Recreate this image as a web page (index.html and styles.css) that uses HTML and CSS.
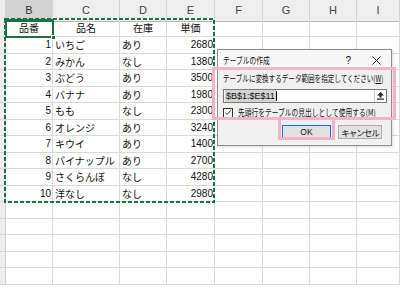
FILE: index.html
```html
<!DOCTYPE html>
<html lang="ja">
<head>
    <meta charset="UTF-8">
    <meta name="viewport" content="width=device-width, initial-scale=1.0">
    <title>テーブルの作成</title>
    <link rel="stylesheet" href="styles.css">
</head>
<body>
    <div class="sheet">
        <div class="row head">
            <div class="rh"></div><div class="ch sel">B</div><div class="ch">C</div><div class="ch">D</div><div class="ch">E</div><div class="ch">F</div><div class="ch">G</div><div class="ch">H</div><div class="ch">I</div>
        </div>
        <div class="row">
            <div class="rh"></div><div class="c mid">品番</div><div class="c mid">品名</div><div class="c mid">在庫</div><div class="c mid">単価</div><div class="c"></div><div class="c"></div><div class="c"></div><div class="c"></div>
        </div>
        <div class="row">
            <div class="rh"></div><div class="c num">1</div><div class="c">いちご</div><div class="c">あり</div><div class="c num">2680</div><div class="c"></div><div class="c"></div><div class="c"></div><div class="c"></div>
        </div>
        <div class="row s">
            <div class="rh"></div><div class="c num">2</div><div class="c">みかん</div><div class="c">なし</div><div class="c num">1380</div><div class="c"></div><div class="c"></div><div class="c"></div><div class="c"></div>
        </div>
        <div class="row">
            <div class="rh"></div><div class="c num">3</div><div class="c">ぶどう</div><div class="c">あり</div><div class="c num">3500</div><div class="c"></div><div class="c"></div><div class="c"></div><div class="c"></div>
        </div>
        <div class="row s">
            <div class="rh"></div><div class="c num">4</div><div class="c">バナナ</div><div class="c">あり</div><div class="c num">1980</div><div class="c"></div><div class="c"></div><div class="c"></div><div class="c"></div>
        </div>
        <div class="row">
            <div class="rh"></div><div class="c num">5</div><div class="c">もも</div><div class="c">なし</div><div class="c num">2300</div><div class="c"></div><div class="c"></div><div class="c"></div><div class="c"></div>
        </div>
        <div class="row s">
            <div class="rh"></div><div class="c num">6</div><div class="c">オレンジ</div><div class="c">あり</div><div class="c num">3240</div><div class="c"></div><div class="c"></div><div class="c"></div><div class="c"></div>
        </div>
        <div class="row">
            <div class="rh"></div><div class="c num">7</div><div class="c">キウイ</div><div class="c">あり</div><div class="c num">1400</div><div class="c"></div><div class="c"></div><div class="c"></div><div class="c"></div>
        </div>
        <div class="row s">
            <div class="rh"></div><div class="c num">8</div><div class="c">パイナップル</div><div class="c">あり</div><div class="c num">2700</div><div class="c"></div><div class="c"></div><div class="c"></div><div class="c"></div>
        </div>
        <div class="row">
            <div class="rh"></div><div class="c num">9</div><div class="c">さくらんぼ</div><div class="c">なし</div><div class="c num">4280</div><div class="c"></div><div class="c"></div><div class="c"></div><div class="c"></div>
        </div>
        <div class="row s">
            <div class="rh"></div><div class="c num">10</div><div class="c">洋なし</div><div class="c">なし</div><div class="c num">2980</div><div class="c"></div><div class="c"></div><div class="c"></div><div class="c"></div>
        </div>
        <div class="row">
            <div class="rh"></div><div class="c"></div><div class="c"></div><div class="c"></div><div class="c"></div><div class="c"></div><div class="c"></div><div class="c"></div><div class="c"></div>
        </div>
        <div class="row s">
            <div class="rh"></div><div class="c"></div><div class="c"></div><div class="c"></div><div class="c"></div><div class="c"></div><div class="c"></div><div class="c"></div><div class="c"></div>
        </div>
        <div class="row">
            <div class="rh"></div><div class="c"></div><div class="c"></div><div class="c"></div><div class="c"></div><div class="c"></div><div class="c"></div><div class="c"></div><div class="c"></div>
        </div>
        <div class="row s">
            <div class="rh"></div><div class="c"></div><div class="c"></div><div class="c"></div><div class="c"></div><div class="c"></div><div class="c"></div><div class="c"></div><div class="c"></div>
        </div>
        <div class="row">
            <div class="rh"></div><div class="c"></div><div class="c"></div><div class="c"></div><div class="c"></div><div class="c"></div><div class="c"></div><div class="c"></div><div class="c"></div>
        </div>
    </div>

    <!-- コピー範囲の点線 -->
    <svg class="ants" width="211" height="185" viewBox="0 0 211 185">
        <rect x="1" y="1" width="209" height="183" fill="none" stroke="#1e7145" stroke-width="2" stroke-dasharray="4 2"/>
    </svg>
    <div class="active"><span class="handle"></span></div>

    <div class="dialog">
        <div class="title">
            <span class="title-text"><span class="narrow">テーブルの作成</span></span>
            <span class="help">?</span>
            <svg class="close" width="9" height="9" viewBox="0 0 9 9">
                <path d="M0.5 0.5 L8.5 8.5 M8.5 0.5 L0.5 8.5" stroke="#222" stroke-width="1"/>
            </svg>
        </div>
        <div class="label"><span class="narrow tight">テーブルに変換するデータ範囲を指定してください(<u>W</u>)</span></div>
        <div class="ref">
            <span class="ref-text">$B$1:$E$11</span><span class="caret"></span>
            <span class="ref-btn">
                <svg width="7" height="8" viewBox="0 0 7 8">
                    <path d="M3.5 0 L7 3.5 L4.5 3.5 L4.5 5.5 L2.5 5.5 L2.5 3.5 L0 3.5 Z" fill="#222"/>
                    <rect x="0" y="6.5" width="7" height="1.2" fill="#222"/>
                </svg>
            </span>
        </div>
        <div class="check">
            <span class="box">
                <svg width="9" height="9" viewBox="0 0 9 9">
                    <path d="M1.5 4.5 L3.5 6.8 L7.8 1.8" fill="none" stroke="#222" stroke-width="1"/>
                </svg>
            </span>
            <span class="narrow">先頭行をテーブルの見出しとして使用する(<u>M</u>)</span>
        </div>
        <div class="buttons">
            <button class="btn ok">OK</button>
            <button class="btn">キャンセル</button>
        </div>
    </div>

    <!-- 強調枠 -->
    <div class="mark mark-range"></div>
    <div class="mark mark-ok"></div>
</body>
</html>
```

FILE: styles.css
```css
* {
    margin: 0;
    padding: 0;
    box-sizing: border-box;
}

body {
    position: relative;
    width: 400px;
    height: 298px;
    overflow: hidden;
    background: #ffffff;
    font-family: "Noto Sans CJK JP", "Noto Sans", sans-serif;
    color: #111;
}

/* シート */
.row {
    display: grid;
    grid-template-columns: 6px 47px 67px 47px 48px 48px 47px 47px 1fr;
    height: 17px;
}

.row.s {
    height: 16px;
}

.row.head {
    height: 20px;
}

.rh {
    background: #eeeeee;
    border-right: 1px solid #cfcfcf;
    border-bottom: 1px solid #d8d8d8;
}

.head .rh {
    border-bottom: 1px solid #b9b9b9;
}

.ch {
    background: #eeeeee;
    border-right: 1px solid #d2d2d2;
    border-bottom: 1px solid #b9b9b9;
    font-family: "Liberation Sans", sans-serif;
    font-size: 11px;
    color: #444;
    text-align: center;
    line-height: 20px;
}

.ch.sel {
    background: #d3d3d3;
    border-bottom: 2px solid #1e7145;
    color: #333;
}

.c {
    border-right: 1px solid #dadada;
    border-bottom: 1px solid #dadada;
    font-size: 10px;
    line-height: 16px;
    padding: 0 2px;
    white-space: nowrap;
    overflow: hidden;
}

.s .c {
    line-height: 15px;
}

.c.mid {
    text-align: center;
}

.c.num {
    text-align: right;
    font-family: "Liberation Sans", sans-serif;
    padding-right: 1px;
}

/* 選択範囲 */
.ants {
    position: absolute;
    left: 4px;
    top: 18px;
}

.active {
    position: absolute;
    left: 5px;
    top: 19px;
    width: 49px;
    height: 19px;
    border: 2px solid #1e7145;
}

.handle {
    position: absolute;
    right: -4px;
    bottom: -4px;
    width: 5px;
    height: 5px;
    background: #1e7145;
    border: 1px solid #fff;
}

/* ダイアログ */
.dialog {
    position: absolute;
    left: 217px;
    top: 49px;
    width: 175px;
    height: 97px;
    background: #f0f0f0;
    border: 1px solid #8c8c8c;
    box-shadow: 1px 1px 3px rgba(0, 0, 0, 0.15);
    font-size: 9px;
    color: #111;
    overflow: hidden;
}

/* Meiryo UI 風に横幅を詰める */
.narrow {
    display: inline-block;
    flex: none;
    transform: scaleX(0.75);
    transform-origin: left center;
    white-space: nowrap;
}

.narrow.tight {
    transform: scaleX(0.73);
}

.title {
    display: flex;
    align-items: center;
    height: 20px;
    padding: 0 10px 0 5px;
    background: #f7f7f7;
}

.title-text {
    flex: 1;
}

.help {
    font-family: "Liberation Sans", sans-serif;
    font-size: 10px;
    margin-right: 21px;
}

.label {
    margin: 2px 0 0 5px;
    height: 13px;
    line-height: 13px;
    white-space: nowrap;
}

.ref {
    display: flex;
    align-items: center;
    margin: 4px 0 0 5px;
    width: 164px;
    height: 14px;
    background: #fff;
    border: 1px solid #7a7a7a;
    font-family: "Liberation Sans", sans-serif;
    font-size: 9px;
}

.ref-text {
    background: #d4d4d4;
    padding: 0 1px;
    line-height: 12px;
    margin-left: 1px;
}

.caret {
    width: 1px;
    height: 10px;
    background: #000;
}

.ref-btn {
    margin-left: auto;
    width: 12px;
    height: 12px;
    border-left: 1px solid #d0d0d0;
    display: flex;
    align-items: center;
    justify-content: center;
}

.check {
    display: flex;
    align-items: center;
    gap: 5px;
    margin: 4px 0 0 5px;
    height: 11px;
    white-space: nowrap;
}

.box {
    flex: none;
    width: 10px;
    height: 10px;
    background: #fff;
    border: 1px solid #333;
    display: flex;
    align-items: center;
    justify-content: center;
}

.buttons {
    display: flex;
    justify-content: flex-end;
    gap: 7px;
    margin-top: 7px;
    padding-right: 9px;
}

.btn {
    width: 44px;
    height: 14px;
    background: #e1e1e1;
    border: 1px solid #adadad;
    font-family: "Noto Sans CJK JP", sans-serif;
    font-size: 8.5px;
    letter-spacing: -1px;
    color: #111;
    line-height: 12px;
}

.btn.ok {
    width: 49px;
    border-color: #0078d7;
    font-family: "Liberation Sans", sans-serif;
    letter-spacing: 0;
}

/* ピンクの強調枠 */
.mark {
    position: absolute;
    border: 3px solid #f4b3cb;
}

.mark-range {
    left: 212px;
    top: 67px;
    width: 184px;
    height: 53px;
}

.mark-ok {
    left: 278px;
    top: 117px;
    width: 57px;
    height: 23px;
    border-top: none;
}
```
